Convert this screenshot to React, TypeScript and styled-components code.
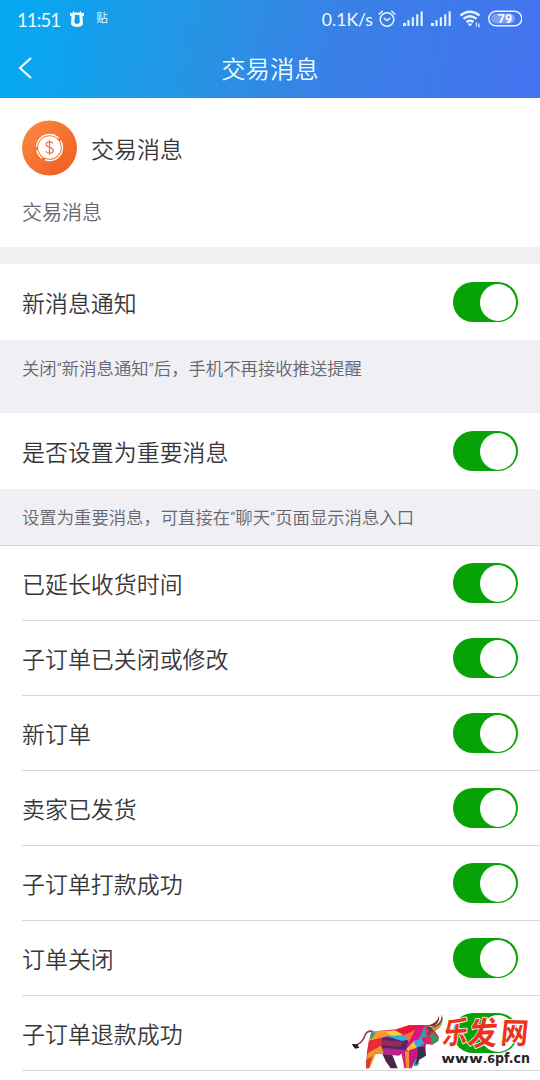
import React from 'react';
import styled, { createGlobalStyle } from 'styled-components';

const GlobalStyle = createGlobalStyle`
  * { box-sizing: border-box; }
  body { margin: 0; background: #fff; }
`;

const Screen = styled.div`
  position: relative;
  width: 540px;
  height: 1080px;
  overflow: hidden;
  background: #fff;
  color: #38383b;
  font-family: Roboto, 'Noto Sans CJK SC', sans-serif;
  font-weight: 350;
`;

const Header = styled.header`
  height: 98px;
  color: #effcff;
  background: linear-gradient(100deg, #03aaf2 0%, #2793e4 38%, #3a80e6 62%, #4472f0 100%);
`;

const StatusBar = styled.div`
  height: 38px;
  padding: 0 18px 0 17px;
  display: flex;
  align-items: center;
`;

const Clock = styled.span`
  width: 52px;
  font-family: Lato, sans-serif;
  font-size: 18.5px;
  line-height: 38px;
  padding-top: 1px;
  font-weight: 400;
  letter-spacing: -0.9px;
`;

const Tag = styled.span`
  display: flex;
  align-items: center;
  justify-content: center;
  width: 12px;
  height: 22px;
  margin-left: 11px;
  margin-bottom: 4px;
  font-size: 11.5px;
  font-weight: 400;
`;

const Speed = styled.span`
  margin-left: auto;
  font-family: Lato, sans-serif;
  font-size: 17.6px;
  font-weight: 400;
`;

const StatusIcons = styled.svg`
  display: block;
  margin-left: 4px;
`;

const NavBar = styled.div`
  height: 60px;
  display: grid;
  grid-template-columns: 60px 1fr 60px;
  align-items: center;
`;

const Title = styled.h1`
  margin: 0;
  padding-top: 3px;
  font-size: 24.4px;
  line-height: 36px;
  font-weight: 350;
  text-align: center;
`;

const BackIcon = styled.svg`
  margin-left: 17px;
`;

const Profile = styled.section`
  height: 149px;
  padding: 22px 22px 0;
`;

const ProfileHead = styled.div`
  display: flex;
  align-items: center;
  gap: 14px;
  height: 56px;
  font-size: 23px;
`;

const ProfileText = styled.p`
  margin: 22px 0 0;
  font-size: 20px;
  line-height: 30px;
  color: #66666e;
`;

const Divider = styled.div`
  height: 17px;
  background: #efeff4;
`;

const Row = styled.div<{ $h: number; $line?: boolean }>`
  height: ${(p) => p.$h}px;
  margin-left: 22px;
  padding-right: 22px;
  display: flex;
  align-items: center;
  justify-content: space-between;
  font-size: 22.95px;
  border-bottom: ${(p) => (p.$line ? '1px solid #d9d9db' : 'none')};
`;

const Label = styled.span`
  line-height: 34px;
  padding-top: 5px;
`;

const Hint = styled.p<{ $h: number; $line?: boolean }>`
  height: ${(p) => p.$h}px;
  margin: 0;
  padding: 16px 22px 0;
  font-size: 17.35px;
  line-height: 26px;
  color: #66666e;
  background: #efeff4;
  border-bottom: ${(p) => (p.$line ? '1px solid #d4d4d8' : 'none')};
  white-space: nowrap;
`;

const Switch = styled.button`
  width: 65px;
  height: 40px;
  padding: 0 2px 0 0;
  border: 0;
  border-radius: 20px;
  background: #06a206;
  display: flex;
  align-items: center;
  justify-content: flex-end;
`;

const Knob = styled.span`
  width: 36px;
  height: 37px;
  border-radius: 50%;
  background: #fff;
`;

const Watermark = styled.svg`
  position: absolute;
  left: 345px;
  top: 1005px;
`;

const Toggle = () => (
  <Switch role="switch" aria-checked="true"><Knob /></Switch>
);

const signalBars = [0, 1, 2, 3, 4];

const StatusGlyphs = () => (
  <StatusIcons width="145" height="38" viewBox="377 0 145 38" fill="none" stroke="#e4f8ff">
    <circle cx="387" cy="19.5" r="6.8" strokeWidth="1.5" />
    <path d="M383.8 18l3.2 2.6 3.2-2.6M378.7 14.5l4-3.5M395.3 14.5l-4-3.5" strokeWidth="1.5" />
    {[403, 431].map((x) => (
      <g key={x} fill="#e4f8ff" stroke="none">
        {signalBars.map((i) => (
          <rect key={i} x={x + i * 4.4} y={23 - i * 2.9} width={i ? 2.1 : 3} height={3 + i * 2.9} />
        ))}
      </g>
    ))}
    <path d="M460.5 15.500q9.500-7.500 19 0M463.500 18.800q6.500-5 13 0M466.500 22q3.500-2.500 7 0" strokeWidth="2.300" />
    <path d="M467.500 23.500h5l-2.500 3z" fill="#e4f8ff" stroke="none" />
    <path d="M476.500 22.500v4M479 23.500v4" strokeWidth="1.200" />
    <rect x="488.800" y="11.300" width="33" height="14.500" rx="7.200" strokeWidth="1.500" />
    <rect x="491" y="13.500" width="24" height="10" rx="5" fill="#7f9ff5" stroke="none" />
    <text x="505" y="23" textAnchor="middle" fontSize="12.500" fontWeight="700" fill="#fff" stroke="none">79</text>
  </StatusIcons>
);

const MascotIcon = () => (
  <svg width="16" height="18" viewBox="0 0 16 18">
    <path d="M1 3h2.500l.8-2 1.200 1.500h5L11.700 1l.8 2H15v3h-1.500l.5 8.500q-2 2.500-6 2.500t-6-2.500L2.500 6H1z" fill="#effcff" />
    <path d="M6 5h4.300l.5 7q-.8 2-2.800 2t-2.600-2z" fill="#1599e9" />
  </svg>
);

const CoinIcon = () => (
  <svg width="55" height="56" viewBox="0 0 55 56">
    <defs>
      <linearGradient id="coin" x1="0" y1="0" x2="1" y2="1">
        <stop offset="0" stopColor="#fc8c45" />
        <stop offset="1" stopColor="#f0591f" />
      </linearGradient>
    </defs>
    <circle cx="27.500" cy="28" r="27.500" fill="url(#coin)" />
    <circle cx="27.500" cy="27.500" r="11.300" fill="#fff" />
    <circle cx="27.500" cy="27.500" r="13" fill="none" stroke="#fff" strokeWidth="1.300" strokeDasharray="25 3 10 3 30 3" />
    <path d="M31 23.500q-1-1.700-3.500-1.700-3.300 0-3.300 2.700 0 2 3.300 2.800 3.800.8 3.800 3.200 0 2.600-3.800 2.600-3 0-3.800-2M27.500 20v15" fill="none" stroke="#e87442" strokeWidth="1.200" />
  </svg>
);

const BullLogo = () => (
  <Watermark width="195" height="75" viewBox="0 0 585 225">
    <path d="M84 79q-17-3-23 10-9 25-27 31" fill="none" stroke="#9c4444" strokeWidth="5" />
    <path d="M20 117l17 1 6 10-13 3z" fill="#28202b" />
    <path d="M80 80l40-4 34-3 38-12 48-1 22 8 20 28-2 12-18 11-18-2-6 20-16 12-10 33-12-18-4 24-18 2-8-44-30 4-46-6-20 2-8 44H63l3-50 5-28z" fill="#d81b72" />
    <path d="M80 80l-9 28 22-3 30-11 20-3-22-15z" fill="#f89a2d" />
    <path d="M72 107l38-9-1 26-42 22z" fill="#e92c38" />
    <path d="M74 97l6-17 12 3-12 20z" fill="#2f9cae" />
    <path d="M120 78l34-2 24 15-38 3z" fill="#ffd130" />
    <path d="M150 75l42-14 48-1-36 17-28 14z" fill="#ed1738" />
    <path d="M112 98l60-3 18 14-8 26-72-6z" fill="#5a2270" />
    <path d="M110 105l64 6-8 14-56-4z" fill="#9a2c54" />
    <path d="M124 93l58-2 14 12-26 5z" fill="#32aee0" />
    <path d="M178 90l34-16-16 44z" fill="#f4762a" />
    <path d="M212 72l28-11-10 34-36 28-3-11z" fill="#df1583" />
    <path d="M240 61l5 35-23 6z" fill="#23a8a0" />
    <path d="M241 61l21 7 12 17-14 12-15-2z" fill="#f03048" />
    <path d="M248 77l12 6-12 12z" fill="#8d288d" />
    <path d="M262 84l18 12-2 12-18 10-12-20z" fill="#2e9b60" />
    <path d="M244 98l16-3-4 20-18 2z" fill="#e2255d" />
    <path d="M184 133l23-26 20 1-10 17-22 20z" fill="#ffc531" />
    <path d="M205 111l24-13 9 19-22 11z" fill="#32a8e2" />
    <path d="M68 144l40-22 10 24-26 2-18 42H63z" fill="#f0952c" />
    <path d="M64 164l18-10-10 36h-9z" fill="#dd3a32" />
    <path d="M112 146l30 4 16 40h-21l-14-20z" fill="#4c2544" />
    <path d="M112 129l70 7-20 16-46-4z" fill="#b5248d" />
    <path d="M180 138l14 4 2 48h-13z" fill="#f29427" />
    <path d="M192 136l24-8-4 32-12 30h-7z" fill="#c8168a" />
    <path d="M218 126h23l2 26-20 12-7 20-8-5 9-25z" fill="#36304a" />
    <path d="M216 160l-5 17 14-4-9 10h-11l4-18z" fill="#25a4a1" />
    <path d="M245 65q24 3 37-12 9-10 8-25 8 18-6 38-12 15-30 14z" fill="#44542d" />
    <path d="M258 68q30-2 34-27 4 26-25 37z" fill="#d99832" />
    <path d="M235 63q23-1 36-12 9-8 11-20 3 20-13 32z" fill="#8e2a34" />
    <g fontFamily="'Noto Sans CJK SC', sans-serif" fontWeight="700" fill="#ee3219" stroke="#fff" strokeWidth="5" paintOrder="stroke" strokeLinejoin="round">
      <text transform="translate(290 118) rotate(-4) skewX(-11) scale(.84 1)" fontSize="90">乐</text>
      <text transform="translate(366 122) rotate(-3) skewX(-9) scale(.92 1)" fontSize="96">发</text>
      <text transform="translate(465 115) rotate(1) skewX(-5) scale(.93 1)" fontSize="88">网</text>
    </g>
    <g fontFamily="'DejaVu Sans', sans-serif" fontWeight="700" fill="#29242a" stroke="#fff" strokeWidth="3" paintOrder="stroke">
      <text x="289" y="174" fontSize="39" textLength="124" lengthAdjust="spacingAndGlyphs">www</text>
      <text x="414" y="174" fontSize="30" textLength="36" lengthAdjust="spacingAndGlyphs">.6</text>
      <text x="450" y="174" fontSize="41" textLength="105" lengthAdjust="spacingAndGlyphs">pf.cn</text>
    </g>
  </Watermark>
);

const orderEvents = ['已延长收货时间', '子订单已关闭或修改', '新订单', '卖家已发货', '子订单打款成功', '订单关闭', '子订单退款成功'];

export default function App() {
  return (
    <Screen>
      <GlobalStyle />
      <Header>
        <StatusBar>
          <Clock>11:51</Clock>
          <MascotIcon />
          <Tag>贴</Tag>
          <Speed>0.1K/s</Speed>
          <StatusGlyphs />
        </StatusBar>
        <NavBar>
          <BackIcon width="16" height="24" viewBox="0 0 16 24" fill="none" stroke="#effcff" strokeWidth="2.2">
            <path d="M14 2L3 12l11 10" />
          </BackIcon>
          <Title>交易消息</Title>
        </NavBar>
      </Header>
      <Profile>
        <ProfileHead><CoinIcon /><Label>交易消息</Label></ProfileHead>
        <ProfileText>交易消息</ProfileText>
      </Profile>
      <Divider />
      <Row $h={76}><Label>新消息通知</Label><Toggle /></Row>
      <Hint $h={73}>关闭“新消息通知”后，手机不再接收推送提醒</Hint>
      <Row $h={76}><Label>是否设置为重要消息</Label><Toggle /></Row>
      <Hint $h={57} $line>设置为重要消息，可直接在“聊天”页面显示消息入口</Hint>
      {orderEvents.map((name) => (
        <Row key={name} $h={75} $line><Label>{name}</Label><Toggle /></Row>
      ))}
      <BullLogo />
    </Screen>
  );
}
